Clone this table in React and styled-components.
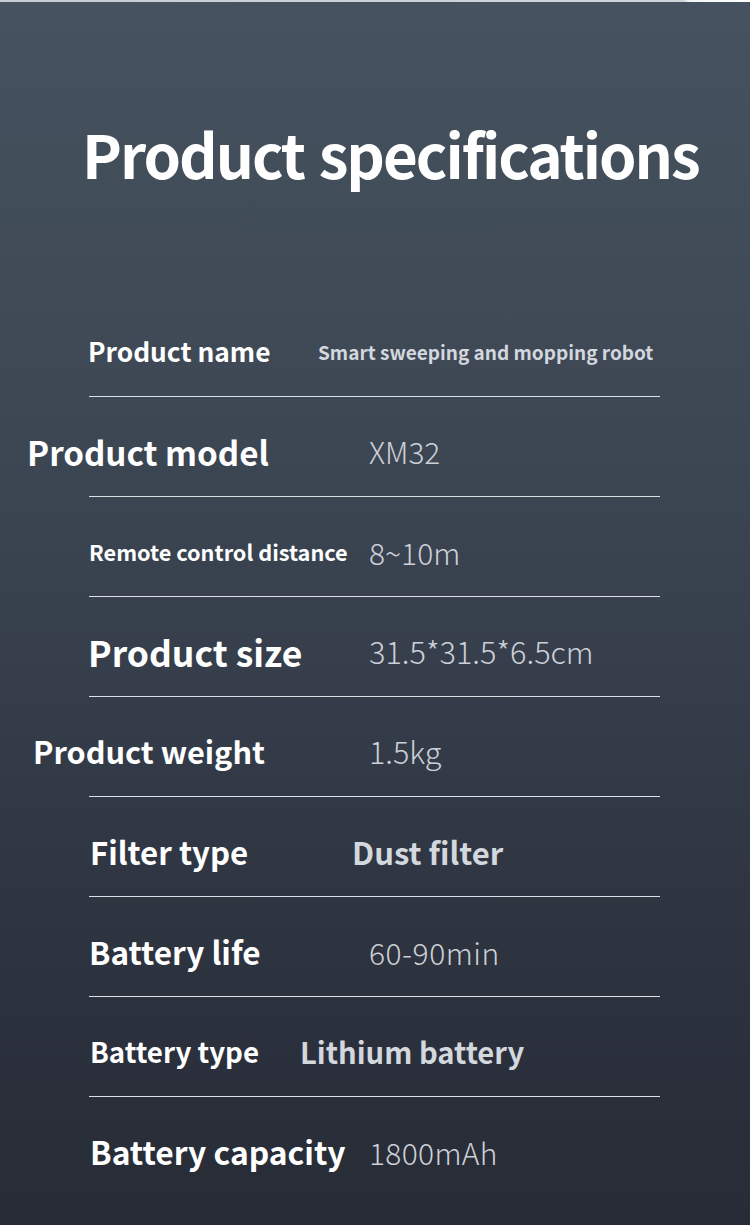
import React from 'react'
import styled, { createGlobalStyle } from 'styled-components'

const GlobalStyle = createGlobalStyle`
    html, body {
        margin: 0;
        padding: 0;
        background: #262b35;
    }
    * {
        box-sizing: border-box;
    }
`

const Page = styled.main`
    width: 750px;
    min-height: 1225px;
    background: linear-gradient(180deg, #46525f 0%, #3f4956 30%, #363e4b 55%, #2c323e 80%, #272c36 100%);
    font-family: "Noto Sans CJK SC", "Noto Sans", sans-serif;
    overflow: hidden;
`
const TopStrip = styled.div`
    height: 2px;
    background: linear-gradient(90deg, #c9ced6 0%, #cfd3db 91%, #f4f5f7 92%, #ffffff 100%);
`
const Title = styled.h1`
    margin: 0;
    padding: 111px 0 0 82px;
    height: 295px;
    font-size: 60px;
    font-weight: 700;
    line-height: 80px;
    color: #ffffff;
    letter-spacing: -2px;
    word-spacing: 3px;
    white-space: nowrap;
`
const SpecList = styled.section`
    display: flex;
    flex-direction: column;
`
const Row = styled.div`
    display: grid;
    grid-template-columns: ${p => p.$valueX}px 1fr;
    align-items: center;
    height: 99px;
    padding-top: 10px;
`
const Label = styled.span`
    padding-left: ${p => p.$x}px;
    font-size: ${p => p.$size}px;
    font-weight: 700;
    color: #ffffff;
    white-space: nowrap;
    line-height: 1;
`
const Value = styled.span`
    font-size: ${p => p.$size}px;
    font-weight: ${p => (p.$bold ? 700 : 300)};
    color: ${p => (p.$bold ? '#d3d7de' : '#ccd0d7')};
    letter-spacing: ${p => p.$spacing || 0}px;
    white-space: nowrap;
    line-height: 1;
`
const Divider = styled.hr`
    margin: 0 0 0 89px;
    width: 571px;
    height: 1px;
    border: none;
    background: #dcdfe4;
`

const specs = [
    { label: 'Product name', x: 88, size: 26.3, value: 'Smart sweeping and mopping robot', valueX: 318, valueSize: 19, bold: true },
    { label: 'Product model', x: 27, size: 33.2, value: 'XM32', valueX: 369, valueSize: 29.7 },
    { label: 'Remote control distance', x: 89, size: 21.7, value: '8~10m', valueX: 369, valueSize: 30 },
    { label: 'Product size', x: 88, size: 35.5, value: '31.5*31.5*6.5cm', valueX: 369, valueSize: 30.7 },
    { label: 'Product weight', x: 33, size: 30.7, value: '1.5kg', valueX: 369, valueSize: 30.5 },
    { label: 'Filter type', x: 90, size: 31.2, value: 'Dust filter', valueX: 352, valueSize: 31, bold: true },
    { label: 'Battery life', x: 89, size: 31.5, value: '60-90min', valueX: 369, valueSize: 30, spacing: 0.5 },
    { label: 'Battery type', x: 90, size: 27.7, value: 'Lithium battery', valueX: 300, valueSize: 29.2, bold: true },
    { label: 'Battery capacity', x: 90, size: 31.8, value: '1800mAh', valueX: 369, valueSize: 30, spacing: 0.3 },
]

const App = () => {
    return (
        <>
            <GlobalStyle />
            <Page>
                <TopStrip />
                <Title>Product specifications</Title>
                <SpecList>
                    {specs.map((s, i) => (
                        <React.Fragment key={s.label}>
                            <Row $valueX={s.valueX}>
                                <Label $x={s.x} $size={s.size}>{s.label}</Label>
                                <Value $size={s.valueSize} $bold={s.bold} $spacing={s.spacing}>{s.value}</Value>
                            </Row>
                            {i < specs.length - 1 && <Divider />}
                        </React.Fragment>
                    ))}
                </SpecList>
            </Page>
        </>
    )
}

export default App
